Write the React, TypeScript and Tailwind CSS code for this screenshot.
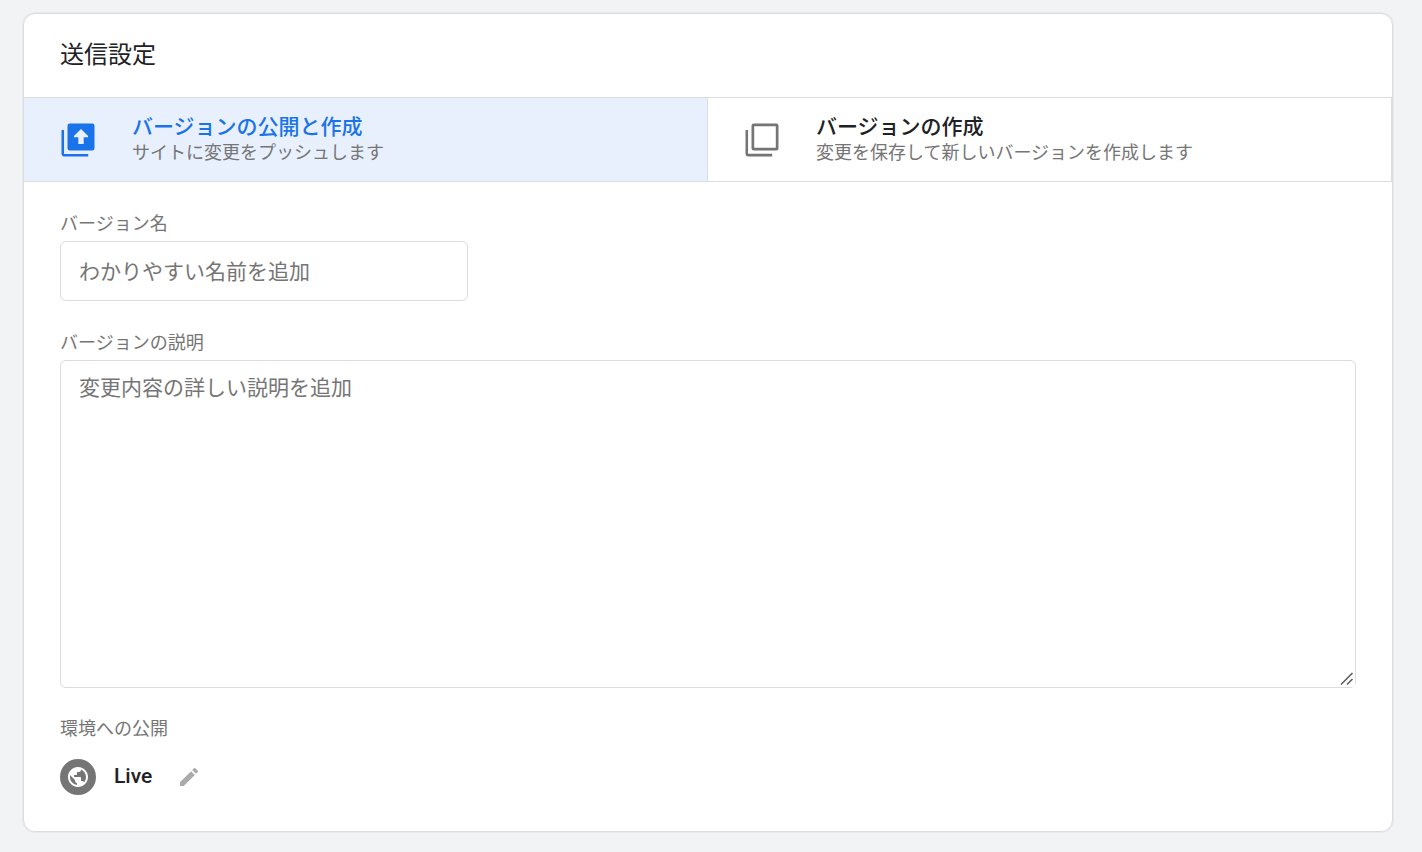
import { useState } from "react";

function PublishIcon() {
  return (
    <svg viewBox="0 0 24 24" className="size-9 shrink-0" fill="currentColor" aria-hidden="true">
      <path d="M2.7 5.3H1v15.9C1 22.2 1.8 23 2.7 23h16.1v-1.7H2.7z" />
      <path
        fillRule="evenodd"
        d="M6.5 1h15A1.5 1.5 0 0 1 23 2.5v15a1.5 1.5 0 0 1-1.5 1.5h-15A1.5 1.5 0 0 1 5 17.5v-15A1.5 1.5 0 0 1 6.5 1zM14 4.7 9.3 9.4v.8h2.9v4.5h3.6v-4.5h2.9v-.8z"
      />
    </svg>
  );
}

function VersionIcon() {
  return (
    <svg viewBox="0 0 24 24" className="size-9 shrink-0" fill="currentColor" aria-hidden="true">
      <path d="M2.7 5.3H1v15.9C1 22.2 1.8 23 2.7 23h16.1v-1.8H2.7z" />
      <path
        fillRule="evenodd"
        d="M6.5 1h15A1.5 1.5 0 0 1 23 2.5v15a1.5 1.5 0 0 1-1.5 1.5h-15A1.5 1.5 0 0 1 5 17.5v-15A1.5 1.5 0 0 1 6.5 1zM6.8 2.8v14.4h14.4V2.8z"
      />
    </svg>
  );
}

function GlobeIcon() {
  return (
    <svg viewBox="0 0 24 24" className="size-6" fill="currentColor" aria-hidden="true">
      <path d="M12 2C6.48 2 2 6.48 2 12s4.48 10 10 10 10-4.48 10-10S17.52 2 12 2zM4 12c0-.61.08-1.21.21-1.78L8.99 15v1c0 1.1.9 2 2 2v1.93C7.06 19.43 4 16.07 4 12zm13.89 5.4c-.26-.81-1-1.4-1.9-1.4h-1v-3c0-.55-.45-1-1-1h-6v-2h2c.55 0 1-.45 1-1V7h2c1.1 0 2-.9 2-2v-.41C17.92 5.77 20 8.65 20 12c0 2.08-.81 3.98-2.11 5.4z" />
    </svg>
  );
}

function PencilIcon() {
  return (
    <svg viewBox="0 0 24 24" className="size-6" fill="currentColor" aria-hidden="true">
      <path d="M3 17.25V21h3.75L17.81 9.94l-3.75-3.75L3 17.25zM20.71 7.04a.996.996 0 0 0 0-1.41l-2.34-2.34a.996.996 0 0 0-1.41 0l-1.83 1.83 3.75 3.75 1.83-1.83z" />
    </svg>
  );
}

const options = [
  {
    id: "publish",
    title: "バージョンの公開と作成",
    detail: "サイトに変更をプッシュします",
    Icon: PublishIcon,
  },
  {
    id: "create",
    title: "バージョンの作成",
    detail: "変更を保存して新しいバージョンを作成します",
    Icon: VersionIcon,
  },
];

export default function App() {
  const [selected, setSelected] = useState("publish");

  return (
    <main
      lang="ja"
      className="min-h-screen bg-[#f1f3f4] pt-[13px] pr-[29px] pb-5 pl-[23px] font-['Roboto','Noto_Sans_CJK_JP',sans-serif] text-[#757575]"
    >
      <section className="overflow-hidden rounded-xl border border-[#dadce0] bg-white shadow-[0_0_0_1px_#e8eaed]">
        <h1 className="px-9 pt-[23px] pb-6 text-2xl leading-9 font-normal text-[#202124]">送信設定</h1>

        <div className="grid grid-cols-2 border-y border-[#dadce0]">
          {options.map(({ id, title, detail, Icon }) => {
            const active = selected === id;
            return (
              <button
                key={id}
                type="button"
                aria-pressed={active}
                onClick={() => setSelected(id)}
                className={`flex items-center gap-9 border-r border-[#dadce0] px-9 pt-[17px] pb-4 text-left ${active ? "bg-[#e8f0fe]" : "bg-white"}`}
              >
                <span className={active ? "text-[#1a73e8]" : "text-[#757575]"}>
                  <Icon />
                </span>
                <span className="flex flex-col">
                  <span
                    className={`text-[21px] leading-[25px] font-medium ${active ? "text-[#1a73e8]" : "text-[#202124]"}`}
                  >
                    {title}
                  </span>
                  <span className="text-lg leading-[25px]">{detail}</span>
                </span>
              </button>
            );
          })}
        </div>

        <div className="flex flex-col px-9 pt-7 pb-9">
          <label htmlFor="version-name" className="text-lg leading-[27px]">
            バージョン名
          </label>
          <input
            id="version-name"
            type="text"
            placeholder="わかりやすい名前を追加"
            className="mt-1 h-[60px] w-[408px] max-w-full rounded-md border border-[#dadce0] px-[18px] pt-px text-[21px] text-[#202124] placeholder:text-[#757575]"
          />

          <label htmlFor="version-description" className="mt-7 text-lg leading-[27px]">
            バージョンの説明
          </label>
          <div className="relative mt-1">
            <textarea
              id="version-description"
              placeholder="変更内容の詳しい説明を追加"
              className="block h-[328px] w-full resize-y rounded-md border border-[#dadce0] px-[18px] py-[11px] text-[21px] leading-8 text-[#202124] placeholder:text-[#757575]"
            />
            <svg
              viewBox="0 0 16 16"
              className="pointer-events-none absolute right-px bottom-px size-4 rounded-br bg-white"
              fill="none"
              stroke="#5f5f5f"
              strokeWidth="1.6"
              aria-hidden="true"
            >
              <path d="M2 13.5 13.5 2M8 13.5 13.5 8" />
            </svg>
          </div>

          <h2 className="mt-[27px] text-lg leading-[27px] font-normal">環境への公開</h2>
          <div className="mt-[17px] flex items-center">
            <span className="flex size-9 items-center justify-center rounded-full bg-[#757575] text-white">
              <GlobeIcon />
            </span>
            <span className="ml-[18px] pb-0.5 text-[21px] leading-8 font-medium text-[#202124]">Live</span>
            <button type="button" aria-label="環境を編集" className="ml-[25px] text-[#aaaaaa]">
              <PencilIcon />
            </button>
          </div>
        </div>
      </section>
    </main>
  );
}
